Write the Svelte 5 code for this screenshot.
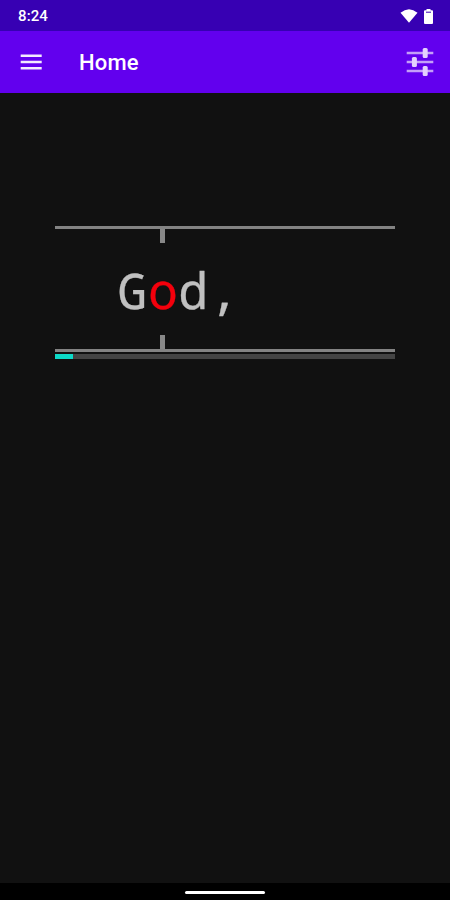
<script>
  const time = '8:24';
  const title = 'Home';
  const progress = 5.3;
</script>

<div class="screen">
  <div class="status">
    <span class="time">{time}</span>
    <svg class="wifi" viewBox="0 0 18 14"><path d="M.5 3.7Q9-3.3 17.5 3.7L9 13.7Z" fill="#fff" /></svg>
    <svg class="battery" viewBox="0 0 9 15"><path d="M2.5 0h4v1.3H8q1 0 1 1V14q0 1-1 1H1q-1 0-1-1V2.3q0-1 1-1h1.5z" fill="#fff" /><path d="M2 3.2h5" stroke="#3700b3" stroke-width="1" /></svg>
  </div>
  <header>
    <svg class="menu" viewBox="0 0 22 16"><path d="M.7 1.8h21M.7 8h21M.7 14.2h21" stroke="#f3eaff" stroke-width="2.4" /></svg>
    <h1>{title}</h1>
    <svg class="tune" viewBox="0 0 28 28">
      <path d="M.7 5h26.6M.7 14h26.6M.7 23h26.6" stroke="#c49ff8" stroke-width="2.3" />
      <g fill="#e3d0fd">
        <rect x="16.7" y="0" width="5" height="10" rx="1.5" />
        <rect x="5.9" y="9" width="5" height="10" rx="1.5" />
        <rect x="16.7" y="18" width="5" height="10" rx="1.5" />
      </g>
    </svg>
  </header>
  <main>
    <div class="reader">
      <div class="line"></div>
      <div class="notch"></div>
      <div class="word">G<span>o</span>d,</div>
      <div class="notch"></div>
      <div class="line"></div>
      <div class="track"><div class="fill" style="width: {progress}%"></div></div>
    </div>
  </main>
  <footer><div class="pill"></div></footer>
</div>

<style>
  :global(body) { margin: 0; background: #111; }
  .screen { width: 450px; height: 900px; display: flex; flex-direction: column; background: #111; font-family: Roboto, sans-serif; color: #fff; overflow: hidden; }
  .status { height: 31px; background: #3700b3; display: flex; align-items: center; box-sizing: border-box; padding: 1px 17px 0 18px; }
  .time { font-size: 15px; font-weight: 500; letter-spacing: 0.1px; flex: 1; }
  .wifi { width: 18px; height: 14px; margin-right: 6px; }
  .battery { width: 9px; height: 15px; }
  header { height: 62px; background: #6200ee; display: flex; align-items: center; box-sizing: border-box; padding: 0 16px 0 20px; }
  .menu { width: 22px; height: 16px; margin-bottom: 1px; }
  h1 { margin: 0 0 0 37px; font-size: 22px; font-weight: 500; letter-spacing: 0.2px; flex: 1; }
  .tune { width: 28px; height: 28px; }
  main { flex: 1; padding: 133px 55px 0; }
  .line { height: 3px; background: #838383; }
  .notch { width: 5px; height: 14px; margin-left: 105.4px; background: #888; }
  .word { height: 92px; padding-left: 62.5px; font: 50px/95px "Noto Sans Mono", "DejaVu Sans Mono", monospace; letter-spacing: 0.4px; color: #c0c0c0; -webkit-text-stroke: 0.3px currentColor; }
  .word span { color: #f4000c; }
  .track { height: 5px; margin-top: 2px; background: #444; }
  .fill { height: 100%; background: #0ddac8; }
  footer { height: 17px; background: #000; display: flex; justify-content: center; align-items: center; }
  .pill { width: 80px; height: 3px; margin-top: 2px; border-radius: 2px; background: #fff; }
</style>
